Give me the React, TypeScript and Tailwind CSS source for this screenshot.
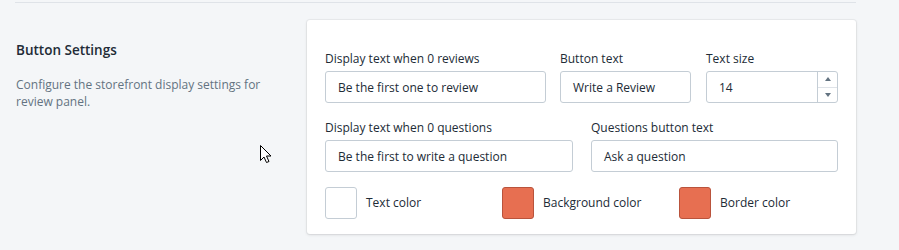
import React from 'react';

const font = { fontFamily: '"Open Sans", "Noto Sans", sans-serif' };

function Field({ label, value, className }: { label: string; value: string; className: string }) {
  return (
    <div className={className}>
      <div className="text-[12px] leading-4 text-[#212b36] mb-1">{label}</div>
      <div className="h-8 border border-[#c4cdd5] rounded-[3px] bg-white flex items-center pl-3 pt-px text-[12px] text-[#212b36]">
        {value}
      </div>
    </div>
  );
}

function Swatch({ label, color, className }: { label: string; color?: string; className?: string }) {
  return (
    <div className={`flex items-center shrink-0 ${className ?? ''}`}>
      {color ? (
        <div className="w-8 h-8 rounded-[3px] border border-[#b9533c] bg-[#e76f51]" />
      ) : (
        <div className="w-8 h-8 rounded-[3px] border border-[#c4cdd5] bg-white" />
      )}
      <span className="ml-[9px] text-[12px] text-[#212b36]">{label}</span>
    </div>
  );
}

export default function App() {
  return (
    <div className="w-[899px] h-[250px] overflow-hidden bg-[#f4f6f8] relative" style={font}>
      <div className="ml-[15px] w-[841px]">
        <div className="mt-[2px] border-t border-[#dfe3e8]" />
        <div className="flex pt-[17px]">
          <div className="w-[292px] pl-px pt-[20px]">
            <h2 className="text-[13.5px] font-semibold leading-5 text-[#212b36]">Button Settings</h2>
            <p className="mt-[16px] text-[12px] leading-[17px] text-[#637381] pr-6">
              Configure the storefront display settings for review panel.
            </p>
          </div>

          <div className="w-[549px] bg-white rounded-[3px] shadow-[0_0_0_1px_rgba(63,63,68,0.05),0_1px_3px_0_rgba(63,63,68,0.15)] pl-[18px] pr-[18px] pt-[31px] pb-[15px]">
            {/* row 1 */}
            <div className="flex">
              <Field className="w-[221px]" label="Display text when 0 reviews" value="Be the first one to review" />
              <Field className="w-[131px] ml-[14px]" label="Button text" value="Write a Review" />
              <div className="w-[132px] ml-[15px]">
                <div className="text-[12px] leading-4 text-[#212b36] mb-1">Text size</div>
                <div className="h-8 border border-[#c4cdd5] rounded-[3px] bg-white flex">
                  <div className="flex-1 flex items-center pl-3 pt-px text-[12px] text-[#212b36]">14</div>
                  <div className="w-5 border-l border-[#c4cdd5] flex flex-col">
                    <div className="flex-1 flex items-center justify-center border-b border-[#dfe3e8]">
                      <svg width="6" height="4" viewBox="0 0 6 4"><path d="M0 4 L3 0 L6 4 Z" fill="#637381" /></svg>
                    </div>
                    <div className="flex-1 flex items-center justify-center">
                      <svg width="6" height="4" viewBox="0 0 6 4"><path d="M0 0 L3 4 L6 0 Z" fill="#637381" /></svg>
                    </div>
                  </div>
                </div>
              </div>
            </div>

            {/* row 2 */}
            <div className="flex mt-[17px]">
              <Field className="w-[248px]" label="Display text when 0 questions" value="Be the first to write a question" />
              <Field className="w-[247px] ml-[18px]" label="Questions button text" value="Ask a question" />
            </div>

            {/* row 3 */}
            <div className="flex mt-[15px]">
              <Swatch className="w-[177px]" label="Text color" />
              <Swatch className="w-[177px]" label="Background color" color="orange" />
              <Swatch label="Border color" color="orange" />
            </div>
          </div>
        </div>
      </div>

      <svg className="absolute left-[259px] top-[144px]" width="14" height="20" viewBox="0 0 14 20">
        <path d="M1.5 1.5 L1.5 16.5 L5 13 L7.5 18.5 L10 17.5 L7.5 12 L12 12 Z" fill="#fff" stroke="#000" strokeWidth="1" strokeLinejoin="miter" />
      </svg>
    </div>
  );
}
